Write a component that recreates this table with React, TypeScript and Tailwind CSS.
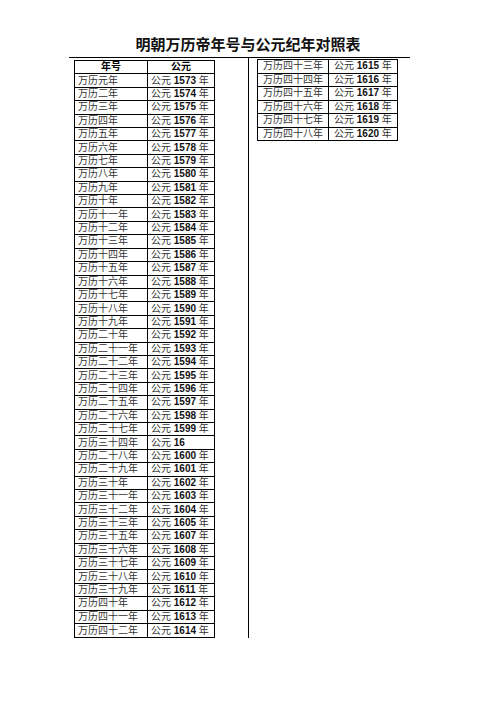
import React from "react";

const NUM = ["", "一", "二", "三", "四", "五", "六", "七", "八", "九"];

// 1 -> 元, 11 -> 十一, 23 -> 二十三
function reignName(n: number) {
  if (n === 1) return "万历元年";
  const tens = Math.floor(n / 10);
  const ones = n % 10;
  let s = "";
  if (tens === 1) s = "十";
  else if (tens > 1) s = NUM[tens] + "十";
  s += NUM[ones];
  return `万历${s}年`;
}

interface Row {
  name: string;
  year: string;
  suffix: boolean;
}

const mk = (n: number): Row => ({ name: reignName(n), year: String(1572 + n), suffix: true });

const leftRows: Row[] = [];
for (let n = 1; n <= 27; n++) leftRows.push(mk(n));
leftRows.push({ name: reignName(34), year: "16", suffix: false });
for (let n = 28; n <= 33; n++) leftRows.push(mk(n));
for (let n = 35; n <= 42; n++) leftRows.push(mk(n));

const rightRows: Row[] = [];
for (let n = 43; n <= 48; n++) rightRows.push(mk(n));

function YearTable({
  rows,
  header,
  className,
  firstCol,
  pad,
}: {
  rows: Row[];
  header?: boolean;
  className: string;
  firstCol: string;
  pad: string;
}) {
  const cell = `border border-black p-0 ${pad} text-left align-middle leading-none whitespace-nowrap`;
  return (
    <table className={`border-collapse table-fixed ${className}`}>
      <colgroup>
        <col className={firstCol} />
        <col />
      </colgroup>
      <tbody>
        {header && (
          <tr>
            <th className="border border-black p-0 text-center font-bold leading-none">年号</th>
            <th className="border border-black p-0 text-center font-bold leading-none">公元</th>
          </tr>
        )}
        {rows.map((r) => (
          <tr key={r.name}>
            <td className={`${cell} text-[#333]`}>{r.name}</td>
            <td className={`${cell} text-[#333]`}>
              公元 <span className="font-bold text-[#111]">{r.year}</span>
              {r.suffix && " 年"}
            </td>
          </tr>
        ))}
      </tbody>
    </table>
  );
}

export default function App() {
  return (
    <div
      className="w-[496px] h-[702px] bg-white text-black text-[10px]"
      style={{ fontFamily: '"Liberation Sans", "Noto Sans CJK SC", sans-serif' }}
    >
      <h1 className="pt-[35px] h-[57px] text-center text-[15px] font-bold leading-[20px] text-[#111]">
        明朝万历帝年号与公元纪年对照表
      </h1>
      <div className="ml-[69px] w-[341px] border-t border-black flex">
        <div className="w-[180px] h-[580px] border-r border-black pt-[2px] pl-[5px]">
          <YearTable
            rows={leftRows}
            header
            firstCol="w-[73px]"
            pad="pl-[3px]"
            className="w-[141px] h-[578px]"
          />
        </div>
        <div className="pt-[1px] pl-[8px]">
          <YearTable
            rows={rightRows}
            firstCol="w-[71px]"
            pad="pl-[5px]"
            className="w-[141px] h-[82px]"
          />
        </div>
      </div>
    </div>
  );
}
